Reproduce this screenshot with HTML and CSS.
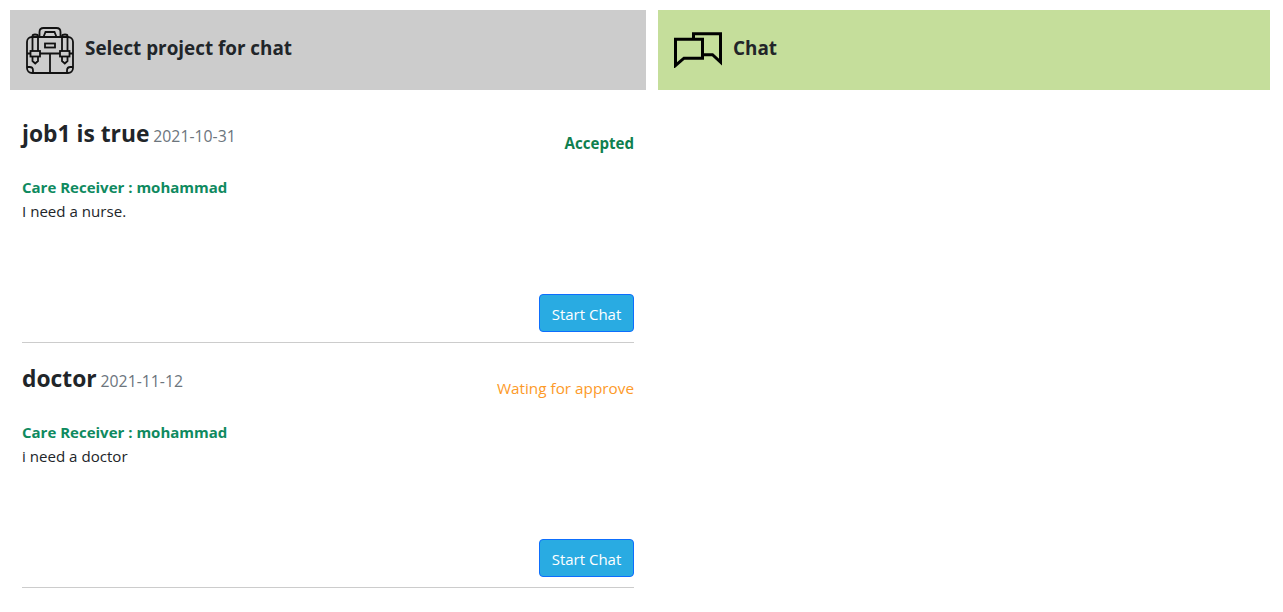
FILE: index.html
```html
<!DOCTYPE html>
<html lang="en">
<head>
<meta charset="UTF-8">
<title>Chat</title>
<link rel="stylesheet" href="styles.css">
</head>
<body>
    <div class="container">
        <div class="left-section">
            <div class="panel-head gray">
                <svg class="icon-bag" width="50" height="48" viewBox="0 0 50 48" fill="none" stroke="#111" stroke-width="1.8">
                    <path d="M14.5 11V6Q14.5 2 18.500 2H31.500Q35.500 2 35.500 6V11"/>
                    <path d="M18.500 11L20.500 6H29.500L31.500 11"/>
                    <rect x="2" y="11" width="46" height="36" rx="5"/>
                    <path d="M7.500 25V10Q7.500 8.500 10 8.500Q13 8.500 13 10V25"/>
                    <path d="M37 25V10Q37 8.500 40 8.500Q42.500 8.500 42.500 10V25"/>
                    <rect x="5.500" y="25" width="9.500" height="5.500" fill="#cccccc"/>
                    <rect x="35" y="25" width="9.500" height="5.500" fill="#cccccc"/>
                    <path d="M7.500 30.500V35L10.200 37.500L13 35V30.500M37 30.500V35L39.800 37.500L42.500 35V30.500"/>
                    <rect x="20" y="17.500" width="10" height="4"/>
                    <path d="M25 27.500V47M2 27.500H5.500M15 27.500H35M44.500 27.500H48"/>
                    <path d="M2 41H4.500Q8 41 8 44.500V47M48 41H45.500Q42 41 42 44.500V47"/>
                </svg>
                <span class="head-text">Select project for chat</span>
            </div>
            <div class="job-list">
                <div class="job">
                    <div class="job-top">
                        <div><span class="job-title">job1 is true</span> <span class="job-date">2021-10-31</span></div>
                        <div class="status accepted">Accepted</div>
                    </div>
                    <div class="receiver">Care Receiver : mohammad</div>
                    <div class="desc">I need a nurse.</div>
                    <div class="job-actions"><button>Start Chat</button></div>
                </div>
                <div class="job">
                    <div class="job-top">
                        <div><span class="job-title">doctor</span> <span class="job-date">2021-11-12</span></div>
                        <div class="status waiting">Wating for approve</div>
                    </div>
                    <div class="receiver">Care Receiver : mohammad</div>
                    <div class="desc">i need a doctor</div>
                    <div class="job-actions"><button>Start Chat</button></div>
                </div>
            </div>
        </div>
        <div class="right-section">
            <div class="panel-head green">
                <svg class="icon-chat" width="48" height="36" viewBox="0 0 48 36" fill="none" stroke="#000" stroke-width="3">
                    <path d="M1.500 7.200H28.500V26.200H10L1.500 33.500Z"/>
                    <path d="M19.500 7.200V1.800H46.500V30L38.500 22.700H28.500"/>
                </svg>
                <span class="head-text">Chat</span>
            </div>
        </div>
    </div>
</body>
</html>
```
FILE: styles.css
```css
body {
    margin: 0;
    padding: 10px;
    font-family: "Open Sans", "Noto Sans", sans-serif;
    font-size: 15.1px;
    color: #212529;
    background-color: #ffffff;
}
.container {
    display: flex;
    gap: 12px;
}
.left-section {
    width: 636px;
}
.right-section {
    width: 612px;
}
.panel-head {
    height: 80px;
    display: flex;
    align-items: center;
    padding-left: 15px;
    font-size: 18.85px;
    font-weight: 700;
}
.head-text {
    padding-bottom: 5px;
}
.gray {
    background-color: #cccccc;
}
.green {
    background-color: #c5de9b;
}
.icon-bag {
    margin-right: 10px;
}
.icon-chat {
    margin-left: 1px;
    margin-right: 11px;
}
.job-list {
    padding-top: 8px;
}
.job {
    margin: 0 12px;
    height: 245px;
    box-sizing: border-box;
    border-bottom: 1px solid #cccccc;
    display: flex;
    flex-direction: column;
    padding-top: 20px;
    padding-bottom: 10px;
}
.job-top {
    display: flex;
    justify-content: space-between;
    align-items: flex-start;
    height: 35px;
    line-height: 31px;
}
.job-title {
    font-size: 22.8px;
    font-weight: 700;
}
.job-date {
    color: #6c757d;
    font-size: 15.8px;
}
.status {
    align-self: flex-end;
    line-height: 20px;
    font-size: 15.3px;
}
.accepted {
    color: #0f7f4f;
    font-weight: 700;
    font-size: 15.1px;
}
.waiting {
    color: #fd9a28;
}
.receiver {
    margin-top: 24px;
    color: #0f8a5f;
    font-weight: 700;
    font-size: 15px;
}
.desc {
    margin-top: 4px;
}
.job-actions {
    margin-top: auto;
    display: flex;
    justify-content: flex-end;
}
button {
    height: 38px;
    width: 95px;
    padding: 2px 0 0;
    font-family: inherit;
    font-size: 15px;
    color: #ffffff;
    background-color: #29abe2;
    border: 1px solid #0d6efd;
    border-radius: 4px;
}
```
